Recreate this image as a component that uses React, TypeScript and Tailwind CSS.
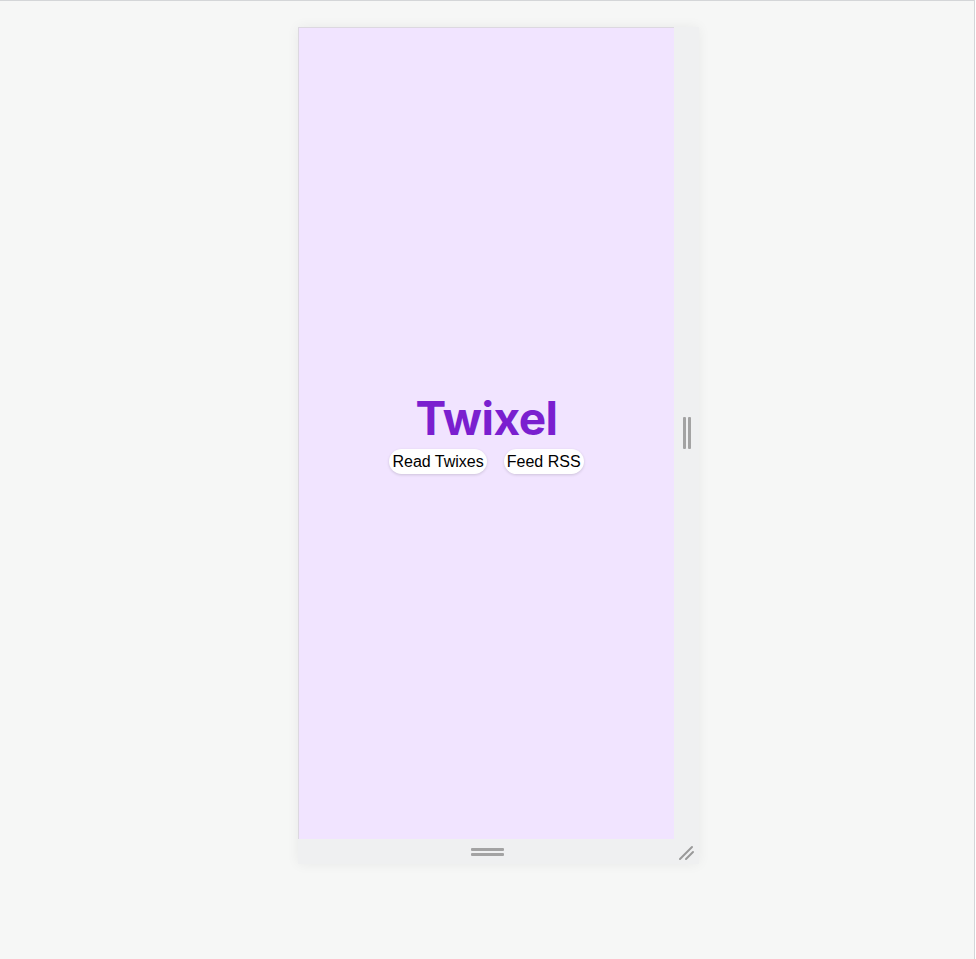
import React from 'react';

const App = () => {
  return (
    <div className="w-[975px] h-[959px] bg-[#f6f7f6] border-t border-r border-[#d4d6d8] pt-[26px] pl-[298px]">
      {/* Resizable device frame */}
      <div className="w-[401px] h-[837px] bg-[#eff0f1] grid grid-cols-[376px_25px] grid-rows-[812px_25px] shadow-[0_0_12px_rgba(0,0,0,0.06)]">
        <div className="bg-[#f1e4ff] border-t border-l border-[#dcd8e0] flex flex-col items-center justify-center">
          <h1 className="text-[46px] leading-[50px] font-bold text-[#7a1fcf] tracking-[-0.5px] font-['Inter',sans-serif]">
            Twixel
          </h1>
          <div className="flex gap-[17px] mt-[6px] font-['Liberation_Sans',sans-serif]">
            <button className="h-[25px] px-[3px] bg-white rounded-full text-[16px] text-black shadow-[0_1px_3px_rgba(0,0,0,0.15)]">
              Read Twixes
            </button>
            <button className="h-[25px] px-[3px] bg-white rounded-full text-[16px] text-black shadow-[0_1px_3px_rgba(0,0,0,0.15)]">
              Feed RSS
            </button>
          </div>
        </div>
        {/* right handle */}
        <div className="flex items-center justify-center gap-[2px]">
          <div className="w-[3px] h-[32px] bg-[#a3a3a3] rounded-[1px]" />
          <div className="w-[3px] h-[32px] bg-[#a3a3a3] rounded-[1px]" />
        </div>
        {/* bottom handle */}
        <div className="flex flex-col items-center justify-center gap-[2px] pl-[2px]">
          <div className="w-[33px] h-[3px] bg-[#a3a3a3] rounded-[1px]" />
          <div className="w-[33px] h-[3px] bg-[#a3a3a3] rounded-[1px]" />
        </div>
        {/* corner handle */}
        <div className="flex items-center justify-center">
          <svg width="18" height="18" viewBox="0 0 18 18">
            <line x1="2" y1="16" x2="14" y2="4" stroke="#999" strokeWidth="2" strokeLinecap="round" />
            <line x1="8" y1="16" x2="15" y2="9" stroke="#999" strokeWidth="2" strokeLinecap="round" />
          </svg>
        </div>
      </div>
    </div>
  );
};

export default App;
